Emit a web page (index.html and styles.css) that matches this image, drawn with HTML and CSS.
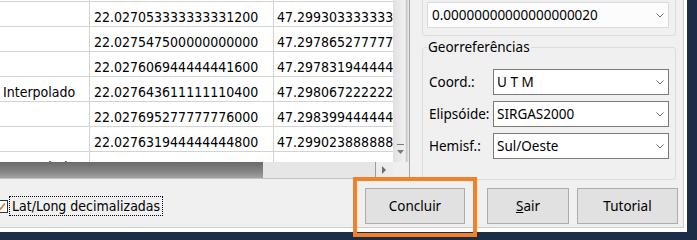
FILE: index.html
```html
<!DOCTYPE html>
<html lang="pt">
<head>
<meta charset="utf-8">
<link rel="stylesheet" href="styles.css">
</head>
<body>
<div class="screen">
  <div class="window">
    <div class="dialog">
      <div class="top">
        <div class="grid">
          <div class="grid-main">
            <div class="grid-view">
              <div class="rows">
                <div class="row"><div class="c c1"></div><div class="c c2"></div><div class="c c3"></div></div>
                <div class="row"><div class="c c1"></div><div class="c c2">22.027053333333331200</div><div class="c c3">47.299303333333331200</div></div>
                <div class="row"><div class="c c1"></div><div class="c c2">22.027547500000000000</div><div class="c c3">47.297865277777777600</div></div>
                <div class="row"><div class="c c1"></div><div class="c c2">22.027606944444441600</div><div class="c c3">47.297831944444444800</div></div>
                <div class="row"><div class="c c1">Interpolado</div><div class="c c2">22.027643611111110400</div><div class="c c3">47.298067222222222400</div></div>
                <div class="row"><div class="c c1"></div><div class="c c2">22.027695277777776000</div><div class="c c3">47.298399444444444800</div></div>
                <div class="row"><div class="c c1"></div><div class="c c2">22.027631944444444800</div><div class="c c3">47.299023888888888000</div></div>
                <div class="row"><div class="c c1">Interpolado</div><div class="c c2">22.027657777777776000</div><div class="c c3">47.299153333333332800</div></div>
              </div>
            </div>
            <div class="vscroll">
              <div class="vthumb"></div>
              <div class="vbtn">
                <svg width="16" height="18" viewBox="0 0 16 18"><line x1="4" y1="0.5" x2="11" y2="0.5" stroke="#7a7a7a"/><polygon points="4,6 11,6 7.5,10" fill="#7c7c7c"/></svg>
              </div>
            </div>
          </div>
          <div class="hbar">
            <div class="hscroll">
              <div class="hthumb"></div>
              <div class="htrack"></div>
              <div class="hbtn">
                <svg width="16" height="16" viewBox="0 0 16 16"><polygon points="6,4 6,12 10,8" fill="#6e6e6e"/></svg>
              </div>
            </div>
            <div class="corner"></div>
          </div>
        </div>
        <div class="side">
          <div class="group g1">
            <div class="combo light">
              <span>0.00000000000000000020</span>
              <svg class="chev" width="8" height="5" viewBox="0 0 8 5"><polyline points="0.5,0.5 4,4 7.5,0.5" fill="none" stroke="#6a6a6a"/></svg>
            </div>
          </div>
          <div class="group g2">
            <span class="legend">Georreferências</span>
            <div class="fields">
              <div class="field">
                <span class="lbl">Coord.:</span>
                <div class="combo"><span>U T M</span><svg class="chev" width="8" height="5" viewBox="0 0 8 5"><polyline points="0.5,0.5 4,4 7.5,0.5" fill="none" stroke="#6a6a6a"/></svg></div>
              </div>
              <div class="field">
                <span class="lbl">Elipsóide:</span>
                <div class="combo"><span>SIRGAS2000</span><svg class="chev" width="8" height="5" viewBox="0 0 8 5"><polyline points="0.5,0.5 4,4 7.5,0.5" fill="none" stroke="#6a6a6a"/></svg></div>
              </div>
              <div class="field">
                <span class="lbl">Hemisf.:</span>
                <div class="combo"><span>Sul/Oeste</span><svg class="chev" width="8" height="5" viewBox="0 0 8 5"><polyline points="0.5,0.5 4,4 7.5,0.5" fill="none" stroke="#6a6a6a"/></svg></div>
              </div>
            </div>
          </div>
        </div>
      </div>
      <div class="bottom">
        <div class="check">
          <span class="box"><svg width="11" height="11" viewBox="0 0 11 11"><polyline points="2,5.5 4.5,8 9,2.5" fill="none" stroke="#d9763a" stroke-width="1.6"/></svg></span>
          <span class="focus">Lat/Long decimalizadas</span>
        </div>
        <div class="btn b1">Concluir</div>
        <div class="btn b2"><span><u>S</u>air</span></div>
        <div class="btn b3">Tutorial</div>
      </div>
    </div>
  </div>
  <div class="highlight"></div>
</div>
</body>
</html>
```

FILE: styles.css
```css
* { box-sizing: border-box; }
body { margin: 0; overflow: hidden; }

.screen {
  position: relative;
  width: 697px;
  height: 240px;
  background: #1b2d47;
  overflow: hidden;
}
.window {
  width: 687px;
  height: 232px;
  background: #ffffff;
}
.dialog {
  width: 684px;
  height: 228px;
  background: #f0f0f0;
  border-right: 1px solid #cfcfcf;
  border-bottom: 1px solid #cfcfcf;
  display: flex;
  flex-direction: column;
  overflow: hidden;
}
.top {
  display: flex;
  height: 180px;
  flex: none;
}

/* grid */
.grid {
  width: 410px;
  height: 179px;
  flex: none;
  border-right: 1px solid #a8a8a8;
  border-bottom: 1px solid #c2c2c2;
  background: #ffffff;
  display: flex;
  flex-direction: column;
}
.grid-main {
  display: flex;
  height: 162px;
  flex: none;
}
.grid-view {
  width: 393px;
  flex: none;
  overflow: hidden;
}
.rows { margin-top: -23px; }
.row {
  display: flex;
  height: 25px;
  border-bottom: 1px solid #d3d3d3;
}
.c {
  flex: none;
  display: flex;
  align-items: flex-end;
  border-right: 1px solid #d3d3d3;
  font-family: "DejaVu Sans Condensed", "DejaVu Sans", sans-serif;
  font-stretch: condensed;
  font-size: 14px;
  line-height: 17px;
  color: #000;
  white-space: nowrap;
  overflow: hidden;
}
.c1 { width: 90px; padding-left: 3px; }
.c2 { width: 184px; padding-left: 4px; }
.c3 { width: 220px; padding-left: 3px; }

.vscroll {
  width: 16px;
  flex: none;
  display: flex;
  flex-direction: column;
  background: linear-gradient(90deg, #e0e0e0 0%, #f1f1f1 75%, #c8c8c8 85%, #eeeeee 100%);
}
.vthumb { flex: 1; }
.vbtn { height: 18px; flex: none; }
.vbtn svg { display: block; }

.hbar {
  display: flex;
  height: 16px;
  flex: none;
}
.hscroll {
  width: 393px;
  flex: none;
  display: flex;
}
.hthumb {
  width: 263px;
  background: linear-gradient(180deg, #6a6a6a 0%, #858585 60%, #a2a2a2 100%);
}
.htrack {
  flex: 1;
  background: #e6e6e6;
  border-right: 1px solid #9c9c9c;
}
.hbtn {
  width: 17px;
  background: #ececec;
}
.hbtn svg { display: block; }
.corner {
  width: 16px;
  background: #efefef;
}

/* side panel */
.side {
  flex: 1;
  padding-left: 12px;
  padding-right: 7px;
  display: flex;
  flex-direction: column;
  font-family: "Noto Sans", "Open Sans", sans-serif;
  font-size: 13.5px;
  color: #000;
}
.group {
  border: 1px solid #dcdcdc;
  border-radius: 3px;
}
.g1 {
  margin-top: -20px;
  padding: 21px 6px 7px 4px;
}
.g2 {
  margin-top: 11px;
  height: 133px;
  padding: 0 6px 0 6px;
  display: flex;
  flex-direction: column;
}
.legend {
  align-self: flex-start;
  margin-top: -10px;
  margin-left: -2px;
  padding: 0 1px;
  line-height: 18px;
  background: #f0f0f0;
}
.fields {
  margin-top: 13px;
  display: flex;
  flex-direction: column;
  gap: 6px;
}
.field {
  display: flex;
  align-items: center;
  height: 26px;
}
.lbl {
  width: 64px;
  flex: none;
  line-height: 18px;
  white-space: nowrap;
}
.combo {
  width: 176px;
  height: 26px;
  border: 1px solid #7a7a7a;
  background: #ffffff;
  display: flex;
  align-items: center;
  justify-content: space-between;
  padding: 0 4px 0 3px;
  line-height: 18px;
  white-space: nowrap;
}
.combo.light {
  width: 242px;
  border-color: #dadada;
  background: #fcfcfc;
  padding-left: 4px;
}
.chev { display: block; flex: none; }

/* bottom */
.bottom {
  display: flex;
  align-items: center;
  height: 36px;
  margin-top: 8px;
  flex: none;
}
.check {
  width: 365px;
  flex: none;
  display: flex;
  align-items: center;
}
.box {
  width: 13px;
  height: 13px;
  margin-left: -5px;
  border: 1px solid #333333;
  background: #ffffff;
  display: flex;
  align-items: center;
  justify-content: center;
}
.box svg { display: block; }
.focus {
  margin-left: 1px;
  height: 20px;
  border: 1px dotted #000;
  padding: 0 2px;
  line-height: 18px;
  font-family: "DejaVu Sans Condensed", "DejaVu Sans", sans-serif;
  font-stretch: condensed;
  font-size: 14px;
  color: #000;
  white-space: nowrap;
}
.btn {
  height: 36px;
  flex: none;
  border: 1px solid #adadad;
  background: #e1e1e1;
  display: flex;
  align-items: center;
  justify-content: center;
  font-family: "Noto Sans", "Open Sans", sans-serif;
  font-size: 13.5px;
  color: #000;
}
.b1 { width: 100px; }
.b2 { width: 82px; margin-left: 22px; }
.b3 { width: 101px; margin-left: 8px; }

.highlight {
  position: absolute;
  left: 353px;
  top: 177px;
  width: 124px;
  height: 60px;
  border: 4px solid #f37f26;
}
```
